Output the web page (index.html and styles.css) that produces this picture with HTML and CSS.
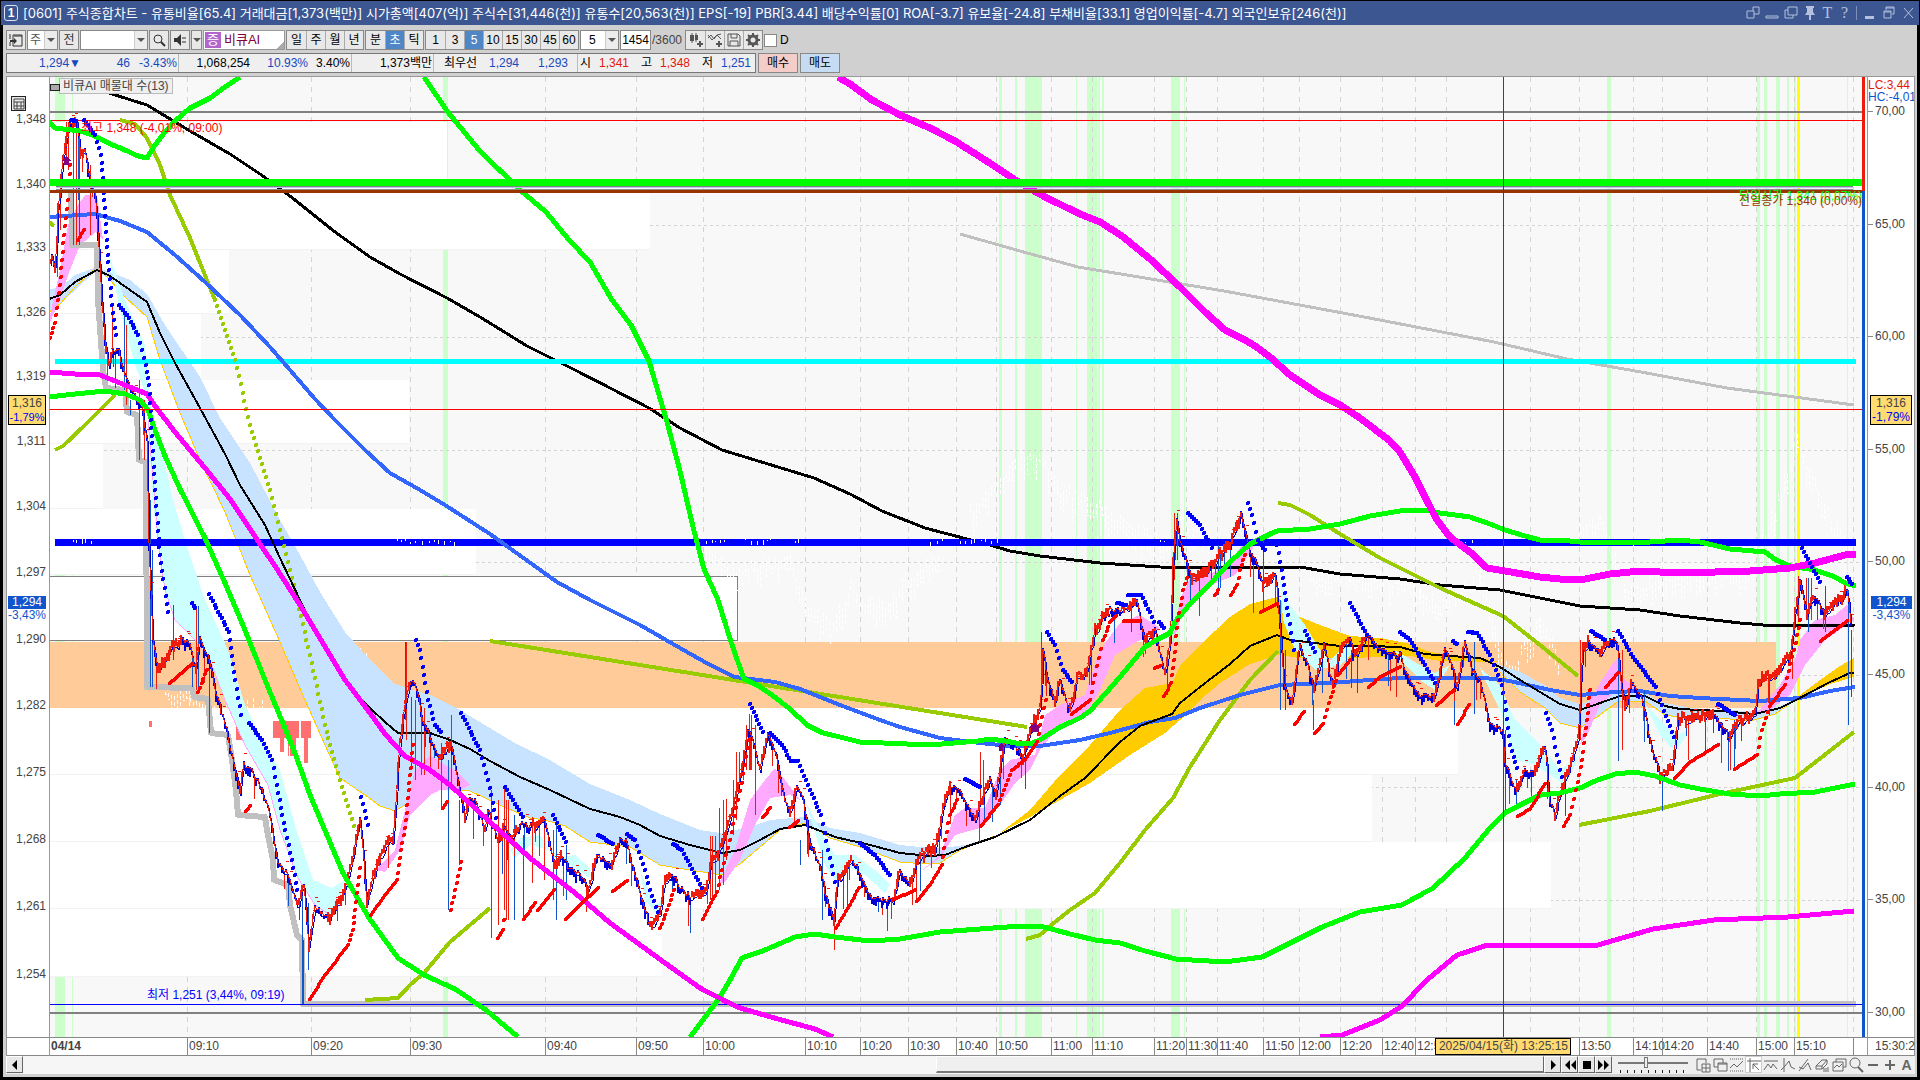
FILE: index.html
```html
<!DOCTYPE html>
<html lang="ko">
<head>
<meta charset="utf-8">
<title>[0601] 주식종합차트</title>
<link rel="stylesheet" href="styles.css">
</head>
<body>
<div class="window">
  <header class="titlebar">
    <span class="badge">1</span>
    <h1 class="title">[0601] 주식종합차트 - 유통비율[65.4] 거래대금[1,373(백만)] 시가총액[407(억)] 주식수[31,446(천)] 유통수[20,563(천)] EPS[-19] PBR[3.44] 배당수익률[0] ROA[-3.7] 유보율[-24.8] 부채비율[33.1] 영업이익률[-4.7] 외국인보유[246(천)]</h1>
    <div class="winbtns">
      <button aria-label="분리"><svg viewBox="0 0 16 16"><path d="M2 6h7v7H2zM8 2h6v7h-5M8 2v4"/></svg></button>
      <button aria-label="숨김"><svg viewBox="0 0 16 16"><path d="M2 11h12v2H2z"/></svg></button>
      <button aria-label="복사"><svg viewBox="0 0 16 16"><path d="M5 2h9v8H5zM5 5H2v8h8v-3"/></svg></button>
      <button aria-label="고정"><svg viewBox="0 0 16 16"><path class="solid" d="M4 1h8v2h-1v4l2 3H9v5H7v-5H3l2-3V3H4z"/></svg></button>
      <button class="glyph">T</button>
      <button class="glyph">?</button>
      <span class="sep"></span>
      <button aria-label="최소화"><svg viewBox="0 0 16 16"><path class="solid" d="M3 11h9v3H3z"/></svg></button>
      <button aria-label="이전 크기"><svg viewBox="0 0 16 16"><path d="M5 5V2h8v7h-2M5 3h8M3 6h7v7H3zM3 7h7"/></svg></button>
      <button aria-label="닫기"><svg viewBox="0 0 16 16"><path d="M4 3l9 10M13 3L4 13"/></svg></button>
    </div>
  </header>

  <div class="panel">
    <div class="tools">
      <button class="btn" aria-label="메뉴"><svg viewBox="0 0 16 16"><path d="M5 3h9v11H5zM6 4h8M2 2v5M2 10v4"/><path class="solid" d="M2 8h4V6l3 3-3 3v-2H2z"/></svg></button>
      <div class="combo w-31"><select aria-label="구분"><option>주</option></select><i></i></div>
      <button class="btn">전</button>
      <div class="combo w-68"><input aria-label="종목코드" value=""><i></i></div>
      <button class="btn" aria-label="찾기"><svg viewBox="0 0 16 16"><circle cx="7" cy="7" r="4"/><path d="M10 10l4 4" stroke-width="2"/></svg></button>
      <button class="btn" aria-label="소리"><svg viewBox="0 0 16 16"><path class="solid" d="M2 6h3l4-4v12l-4-4H2z"/><path d="M11 5v2M11 9v2M13 5v2M13 9v2"/></svg></button>
      <button class="btn drop" aria-label="소리 설정"><i></i></button>
      <div class="stock"><b>증</b><span>비큐AI</span></div>
      <div class="group"><button>일</button><button>주</button><button>월</button><button>년</button></div>
      <div class="group"><button>분</button><button class="on">초</button><button>틱</button></div>
      <div class="group"><button>1</button><button>3</button><button class="on">5</button><button>10</button><button>15</button><button>30</button><button>45</button><button>60</button></div>
      <div class="combo w-39"><select aria-label="주기"><option>5</option></select><i></i></div>
      <input class="count" aria-label="봉 개수" value="1454">
      <span class="total">/3600</span>
      <div class="group">
        <button aria-label="차트 추가"><svg viewBox="0 0 16 16"><path class="solid" d="M2 3h4v6H2zM7 3h3v5H7zM11 9h2v2h2v2h-2v2h-2v-2H9v-2h2z"/><path d="M4 1v10M8 1v9"/></svg></button>
        <button aria-label="지표 추가"><svg viewBox="0 0 16 16"><path d="M1 6l3-3 3 4 3-4 4 4M1 3l4 5 5-5 4-1"/><path class="solid" d="M11 9h2v2h2v2h-2v2h-2v-2H9v-2h2z"/></svg></button>
        <button aria-label="저장"><svg viewBox="0 0 16 16"><path d="M2 2h10l2 2v10H2zM5 2v4h6V2M4 14V9h8v5"/></svg></button>
        <button aria-label="설정"><svg viewBox="0 0 16 16"><circle cx="8" cy="8" r="4" stroke-width="3"/><path stroke-width="2" d="M8 1v3M8 12v3M1 8h3M12 8h3M3 3l2 2M11 11l2 2M13 3l-2 2M5 11l-2 2"/></svg></button>
      </div>
      <label class="check"><input type="checkbox">D</label>
    </div>

    <div class="quote">
      <div class="quotebox">
        <span class="c74 down">1,294▼</span><span class="c49 down">46</span><span class="c47 down">-3.43%</span><span class="vr"></span>
        <span class="c70">1,068,254</span><span class="c58 down">10.93%</span><span class="c42">3.40%</span><span class="vr"></span>
        <span class="c79">1,373백만</span><span class="vr"></span>
        <span class="c42">최우선</span><span class="c42 down">1,294</span><span class="c49 down">1,293</span><span class="gap"></span><span class="vr"></span>
        <span class="c12">시</span><span class="c38 up">1,341</span><span class="c24">고</span><span class="c38 up">1,348</span><span class="c24">저</span><span class="c38 down">1,251</span>
      </div>
      <button class="trade buy">매수</button>
      <button class="trade sell">매도</button>
    </div>

    <main class="chart">
      <div class="axis left" id="leftAxis">
        <button class="gridbtn" aria-label="표"><svg viewBox="0 0 16 16"><path d="M3 3h10v10H3zM3 6h10M3 10h10M6 6v7M10 6v7"/></svg></button>
        <div class="cursor">1,316<br><em>-1,79%</em></div>
        <div class="last"><b>1,294</b><span>-3,43%</span></div>
      </div>
      <div class="plot">
        <svg id="plot" viewBox="50 77 1817 960" preserveAspectRatio="none" role="img" aria-label="비큐AI 5초 차트"></svg>
        <span class="legend">비큐AI 매물대 수(13)</span>
        <span class="note high">최고 1,348 (-4,01%, 09:00)</span>
        <span class="note low">최저 1,251 (3,44%, 09:19)</span>
        <span class="note open">당일시가 1,341 (0,07%)</span>
        <span class="note prev">전일종가 1,340 (0,00%)</span>
      </div>
      <div class="axis right" id="rightAxis">
        <div class="lc">LC:3,44</div><div class="hc">HC:-4,01</div>
        <div class="cursor">1,316<br><em>-1,79%</em></div>
        <div class="last"><b>1,294</b><span>-3,43%</span></div>
      </div>
      <div class="corner"></div>
      <div class="times" id="times"><span class="stamp">2025/04/15(화) 13:25:15</span></div>
      <div class="endtime">15:30:2</div>
    </main>

    <footer class="scroll">
      <button class="btn arrow" aria-label="왼쪽"><svg viewBox="0 0 16 16"><path class="solid" d="M10 3v10L5 8z"/></svg></button>
      <div class="track"><div class="thumb"></div></div>
      <div class="play">
        <button class="btn" aria-label="재생"><svg viewBox="0 0 16 16"><path class="solid" d="M6 3v10l5-5z"/></svg></button>
        <button class="btn" aria-label="뒤로"><svg viewBox="0 0 16 16"><path class="solid" d="M8 3v10L3 8zM14 3v10L9 8z"/></svg></button>
        <button class="btn" aria-label="정지"><svg viewBox="0 0 16 16"><path class="solid" d="M4 4h8v8H4z"/></svg></button>
        <button class="btn" aria-label="앞으로"><svg viewBox="0 0 16 16"><path class="solid" d="M2 3v10l5-5zM8 3v10l5-5z"/></svg></button>
      </div>
      <div class="slider"><input type="range" min="0" max="10" value="4" aria-label="속도"></div>
      <div class="icons">
        <button aria-label="창 추가"><svg viewBox="0 0 16 16"><path d="M6 13H2V2h9v4M7 7h8v8H7zM11 7v8M7 11h8"/></svg></button>
        <button aria-label="창 겹침"><svg viewBox="0 0 16 16"><path d="M6 10H2V2h9v4M6 6h9v8H6zM6 7h9"/></svg></button>
        <button aria-label="추세"><svg viewBox="0 0 16 16"><path stroke-dasharray="1 1" d="M1 2h14M1 14h14"/><path d="M1 11l4-4 3 3 6-6"/></svg></button>
        <button class="on" aria-label="십자선"><svg viewBox="0 0 16 16"><path d="M1 4h14M4 1v14M7 7l6 6M7 7v5M7 7h5"/></svg></button>
        <button aria-label="수평선"><svg viewBox="0 0 16 16"><path d="M1 4h14M1 13l4-6 3 4 2-4 4 5"/></svg></button>
        <button aria-label="수직선"><svg viewBox="0 0 16 16"><path d="M4 1v14M1 13l4-4 4-5 2 6 4 2"/></svg></button>
        <button aria-label="추세선"><svg viewBox="0 0 16 16"><path d="M2 14L11 2M2 10l4 2 5-6 3 7"/></svg></button>
        <button aria-label="지우기"><svg viewBox="0 0 16 16"><path d="M2 9l6-6h5l-5 6zM2 9v3h6l5-5V3M8 9v3M10 11v4M12 11v4M14 10v5"/></svg></button>
        <button aria-label="차트 복사"><svg viewBox="0 0 16 16"><path d="M5 5V2h10v8h-3M2 5h10v9H2zM3 11l3-3 2 2 3-3"/></svg></button>
        <button aria-label="돋보기"><svg viewBox="0 0 16 16"><circle cx="7" cy="6" r="5"/><path stroke-width="2" d="M10 10l5 5"/></svg></button>
        <button aria-label="축소"><svg viewBox="0 0 16 16"><path stroke-width="2" d="M3 8h10"/></svg></button>
        <button aria-label="확대"><svg viewBox="0 0 16 16"><path stroke-width="2" d="M3 8h10M8 3v10"/></svg></button>
        <button class="glyph">A</button>
      </div>
    </footer>
  </div>
</div>
<script src="chart.js"></script>
</body>
</html>
```
FILE: styles.css
```css
* { box-sizing: border-box; }
body {
  margin: 0;
  background: #000;
  font: 12px/14px "Liberation Sans", "Noto Sans CJK KR", sans-serif;
  color: #000;
}
button, input, select { font: inherit; color: inherit; margin: 0; padding: 0; border: 0; border-radius: 0; background: none; appearance: none; }
svg { display: block; }
button svg { width: 16px; height: 16px; fill: none; stroke: currentColor; stroke-width: 1; flex: none; }
svg .solid { fill: currentColor; stroke: none; }

.window { display: flex; flex-direction: column; min-height: 100vh; padding: 1px 1px 3px; }

/* title bar */
.titlebar { display: flex; align-items: center; height: 24px; padding: 0 2px 0 3px; background: #3b5691; color: #fff; }
.badge { width: 14px; height: 16px; margin-right: 5px; border: 1px solid #dbe3f5; border-radius: 3px; text-align: center; font-weight: bold; line-height: 14px; }
.title { margin: 0; font-family: Inter, "Noto Sans CJK KR", sans-serif; font-size: 13px; line-height: 20px; font-weight: normal; white-space: nowrap; flex: 1; min-width: 0; }
.winbtns { display: flex; align-items: center; color: #b4c0dc; }
.winbtns button { width: 19px; display: flex; justify-content: center; }
.winbtns .glyph { width: 17px; font: 16px/16px "Liberation Serif", serif; }
.winbtns .sep { width: 1px; height: 14px; margin: 0 3px; background: #7d8fb8; }

.panel { display: flex; flex-direction: column; flex: 1; margin: 0 2px; padding: 5px 2px 3px 3px; background: #d0d0d0; }

/* tool row */
.tools { display: flex; height: 20px; gap: 1px; }
.btn { display: flex; align-items: center; justify-content: center; width: 20px; height: 20px; border: 1px solid #888; background: #e8e8e8; color: #555; overflow: hidden; }
.tools .btn { color: #333; }
.btn.drop { width: 11px; }
.combo { display: flex; height: 20px; border: 1px solid #888; background: #fff; }
.combo select, .combo input { flex: 1; min-width: 0; padding: 0 4px; }
.w-31 { width: 31px; color: #555; }
.combo.w-31 select { padding: 0 0 0 2px; }
.w-39 { width: 39px; }
.w-39 select { padding: 0 8px; }
.w-68 { width: 68px; }
i { display: flex; align-items: center; justify-content: center; width: 13px; background: #ececec; border-left: 1px solid #ccc; }
i::after { content: ""; border: 4px solid transparent; border-top-color: #555; border-bottom: 0; }
.drop i { border: 0; width: 9px; }
.stock { display: flex; align-items: center; width: 82px; height: 20px; padding: 1px; border: 1px solid #999; background: linear-gradient(135deg, #fff 92%, #aaa 92%); color: #800040; font-size: 13px; }
.stock b { width: 16px; height: 16px; margin-right: 3px; background: #b266cc; color: #fff; font-weight: normal; text-align: center; line-height: 16px; }
.group { display: flex; border: 1px solid #888; background: #e8e8e8; }
.group button { display: flex; align-items: center; justify-content: center; width: 19px; border-left: 1px solid #aaa; }
.group button:first-child { border-left: 0; }
.group .on { background: #4f86c6; color: #fff; }
.group svg { color: #555; }
.count { width: 31px; border: 1px solid #888; background: #fff; text-align: center; }
.total { width: 32px; line-height: 20px; color: #444; }
.check { display: flex; align-items: center; gap: 3px; }
.check input { width: 13px; height: 13px; border: 1px solid #888; background: #fff; }

/* quote row */
.quote { display: flex; gap: 2px; height: 20px; margin: 3px 0; }
.quotebox { display: flex; align-items: center; width: 750px; border: 1px solid #777; background: #efefef; text-align: right; }
.quotebox .vr { width: 1px; height: 18px; margin: 0 1px; background: #bbb; }
.quotebox .gap { width: 8px; }
.c12 { width: 12px; } .c24 { width: 23px; } .c38 { width: 38px; } .c42 { width: 42px; }
.c47 { width: 47px; } .c49 { width: 49px; } .c58 { width: 58px; } .c70 { width: 70px; }
.c74 { width: 74px; } .c79 { width: 79px; }
.down { color: #1748c0; }
.up { color: #e21a0a; }
.trade { width: 40px; border: 1px solid #888; }
.buy { background: #f4cdc8; }
.sell { background: #c5dcf3; }

/* chart */
.chart { flex: 1; display: grid; grid-template-columns: 42px minmax(0, 1fr) 47px; grid-template-rows: minmax(400px, 1fr) 19px; border: 1px solid #999; border-bottom: 0; background: #fff; color: #444; }
.plot { position: relative; border-left: 1px solid #999; min-height: 0; }
.plot svg { position: absolute; inset: 0; width: 100%; height: 100%; background: #f8f8f8; }
.legend { position: absolute; left: 9px; top: 1px; padding: 0 3px; border: 1px solid #bbb; background: #efefef; }
.legend::before { content: ""; position: absolute; left: -10px; top: 5px; width: 8px; height: 5px; border: 1px solid #222; background: #aaa; }
.note { position: absolute; white-space: nowrap; }
.high { left: 31px; top: 4.6%; color: #f00; }
.low { left: 97px; top: 94.9%; color: #00f; }
.open { right: 5px; top: 11.7%; color: #0f0; }
.prev { right: 5px; top: 12.2%; color: #930; }
.axis { position: relative; overflow: hidden; }
.axis .tick { position: absolute; margin-top: -8px; }
.left .tick { right: 3px; }
.right { border-left: 1px solid #999; }
.right .tick { left: 0; padding-left: 7px; }
.right .tick::before { content: ""; position: absolute; left: 0; top: 7px; width: 5px; height: 1px; background: #888; }
.gridbtn { position: absolute; left: 4px; top: 19px; width: 15px; height: 15px; border: 1px solid #222; background: #e8e8e8; display: flex; align-items: center; justify-content: center; }
.cursor { position: absolute; top: 33.1%; left: 1px; width: 38px; height: 30px; border: 1px solid #000; background: #ffdb70; text-align: center; white-space: nowrap; }
.right .cursor { left: 2px; width: 42px; }
.cursor em { font-style: normal; color: #00f; }
.left em { font-size: 11px; }
.last { position: absolute; top: 54.1%; left: 1px; width: 38px; text-align: center; color: #1155cc; }
.last b { display: block; height: 13px; line-height: 13px; background: #1155cc; color: #fff; font-weight: normal; }
.last span { display: block; line-height: 13px; }
.right .last { left: 3px; width: 41px; }
.lc, .hc { white-space: nowrap; color: #e21a0a; line-height: 12px; }
.lc { padding-top: 2px; }
.hc { color: #1155cc; }
.times, .corner, .endtime { border-top: 1px solid #888; border-bottom: 1px solid #888; }
.times { position: relative; border-left: 1px solid #999; overflow: hidden; }
.times .t { position: absolute; top: 0; height: 18px; padding-left: 1px; border-left: 1px solid #888; line-height: 17px; white-space: nowrap; }
.times .first { font-weight: bold; border-left: 0; }
.stamp { position: absolute; z-index: 1; left: 76.25%; top: 0; width: 136px; height: 17px; border: 1px solid #000; background: #ffdb70; text-align: center; line-height: 15px; white-space: nowrap; overflow: hidden; }
.endtime { padding-left: 7px; border-left: 1px solid #999; line-height: 17px; white-space: nowrap; }

/* scroll row */
.scroll { display: flex; height: 18px; background: #efefef; }
.scroll .btn { width: 17px; height: 17px; color: #000; border-color: #fff #666 #666 #fff; }
.track { flex: 1; background: #f6f6f6; }
.thumb { width: 40%; margin-left: auto; height: 17px; border: 1px solid #fff; border-right-color: #666; border-bottom: 2px solid #777; background: #efefef; }
.play { display: flex; }
.slider { width: 82px; padding: 0 6px; background: repeating-linear-gradient(90deg, #222 0 1px, transparent 1px 7px) 8px 14px / 68px 3px no-repeat; }
.slider input { display: block; width: 70px; height: 13px; background: linear-gradient(#777, #777) 0 6px / 100% 2px no-repeat; }
.slider input::-webkit-slider-thumb { appearance: none; width: 4px; height: 11px; border: 1px solid #777; background: #eee; }
.icons { display: flex; width: 221px; color: #666; }
.icons button { display: flex; align-items: center; justify-content: center; width: 17px; height: 17px; }
.icons .on { background: #fff; border: 1px solid #ccc; }
.icons .glyph { font-weight: bold; font-size: 14px; }
```
FILE: chart.js
```js
const NS = 'http://www.w3.org/2000/svg';
const svg = document.getElementById('plot');
function el(name, attrs) {
  const n = document.createElementNS(NS, name);
  for (const k in attrs) n.setAttribute(k, attrs[k]);
  svg.appendChild(n);
  return n;
}
const rect = (x, y, x2, y2, fill) => el('rect', { x, y, width: x2 - x, height: y2 - y, fill, 'shape-rendering': 'crispEdges' });
const line = (pts, stroke, w, extra) => el('polyline', Object.assign({ points: pts, fill: 'none', stroke, 'stroke-width': w, 'stroke-linejoin': 'round', 'shape-rendering': 'crispEdges' }, extra));
const area = (pts, fill) => el('polygon', { points: pts, fill, 'shape-rendering': 'crispEdges' });
const parse = s => s.trim().split(/\s+/).map(p => p.split(',').map(Number));
let seed = 7;
const rnd = () => (seed = (seed * 16807) % 2147483647) / 2147483647;

// session highlights
[[55,65],[72,73],[443,448],[999,1002],[1015,1017],[1025,1042],[1076,1077],[1087,1097],[1098,1100],[1102,1104],[1171,1180],[1184,1185],[1607,1611],[1757,1760],[1764,1767],[1776,1780],[1787,1789],[1794,1796],[1847,1848]]
  .forEach(([a, b]) => rect(a, 77, b, 1037, '#ccffcc'));

// time and percent grid
const times = [[50,'04/14'],[187,'09:10'],[311,'09:20'],[410,'09:30'],[545,'09:40'],[636,'09:50'],[703,'10:00'],[805,'10:10'],[860,'10:20'],[908,'10:30'],[956,'10:40'],[996,'10:50'],[1051,'11:00'],[1092,'11:10'],[1154,'11:20'],[1186,'11:30'],[1217,'11:40'],[1263,'11:50'],[1299,'12:00'],[1340,'12:20'],[1382,'12:40'],[1415,'12:5'],[1446,''],[1530,''],[1579,'13:50'],[1633,'14:10'],[1662,'14:20'],[1707,'14:40'],[1756,'15:00'],[1794,'15:10'],[1853,'']];
times.slice(1).forEach(([x]) => line(`${x},77 ${x},1037`, '#d4d4d4', 1, { 'stroke-dasharray': '5 5' }));
[225,337,450,562,675,787,900].forEach(y => line(`50,${y} 1862,${y}`, '#d4d4d4', 1, { 'stroke-dasharray': '3 3' }));

// volume profile
[[122,187,447],[187,250,650],[250,314,229],[314,380,201],[380,444,409],[444,509,103],[509,575,476],[708,775,1458],[775,842,1372],[842,909,1551],[909,977,662]]
  .forEach(([a, b, x]) => { rect(50, a, x, b, '#fff'); rect(50, b - 1, x, b, '#f3f3f3'); });
el('rect', { x: 49, y: 576, width: 688, height: 64, fill: '#fff', stroke: '#808080', 'shape-rendering': 'crispEdges' });
rect(50, 642, 1776, 708, '#ffcc99');
rect(1797, 77, 1800, 1037, '#ffff00');
[[149,721,152,727],[236,721,242,740],[273,721,299,738],[301,721,311,738],[280,738,284,752],[290,738,296,756],[304,738,308,763],[288,738,289,756]].forEach(r => rect(...r, '#ff7070'));

// earlier session trace
function trace(s) {
  const p = parse(s); let d = '';
  for (let i = 1; i < p.length; i++) for (let x = p[i-1][0]; x < p[i][0]; x += 3) {
    const y = p[i-1][1] + (p[i][1] - p[i-1][1]) * (x - p[i-1][0]) / (p[i][0] - p[i-1][0]);
    d += `M${Math.round(x)} ${Math.round(y + rnd() * 14)}v${Math.round(6 + rnd() * 18)}h2`;
  }
  el('path', { d, fill: 'none', stroke: '#fff', 'stroke-dasharray': '4 2', 'shape-rendering': 'crispEdges' });
}
trace('700,530 730,560 790,550 805,590 830,620 850,580 870,595 890,600 905,570 940,545');
trace('970,500 1030,440 1060,480 1160,530 1210,520');
trace('1310,570 1350,560 1420,580 1440,600 1480,560 1503,650 1515,655 1540,610 1560,650');
trace('1580,520 1600,510 1625,580 1660,570 1700,565 1750,560 1775,500 1797,430 1825,500 1850,540');
trace('165,680 190,690 220,700 250,700 265,690'); trace('320,710 345,680 360,645 375,660');

// moving-average clouds
const sky = '#c8e3ff', gold = '#ffcc00';
area('49,289 60,288 75,275 97,267 130,280 147,294 165,325 200,377 220,418 250,463 280,520 300,555 320,592 345,632 370,660 395,684 430,695 460,710 480,722 515,743 550,760 590,784 630,800 660,814 700,830 720,833 750,827 770,820 805,817 830,828 860,833 900,845 930,848 950,847 965,845 995,836 960,850 940,863 925,864 900,862 860,847 830,838 805,823 780,830 760,847 740,864 722,875 690,870 660,865 630,847 590,842 565,826 545,820 530,818 500,805 470,791 440,788 420,796 395,811 380,806 365,795 340,778 325,745 305,700 280,642 250,575 225,512 200,460 180,413 160,360 147,317 125,297 110,280 97,270 60,304 49,312', sky);
line('49,312 60,304 75,287 97,267 110,280 125,297 147,317 160,360 180,413 200,460 225,512 250,575 280,642 305,700 325,745 340,778 365,795 380,806 395,811 420,796 440,788 470,791 500,805 530,818 545,820 565,826 590,842 630,847 660,865 690,870 722,875 740,864 760,847 780,830 805,823 830,838 860,847 900,862 925,864 940,863 960,850 995,836', gold, 1);
area('1000,833 1030,810 1060,775 1090,745 1120,710 1145,688 1172,683 1180,666 1200,645 1230,617 1250,604 1277,597 1295,615 1320,625 1350,636 1380,638 1410,644 1430,652 1450,655 1480,658 1500,662 1440,661 1410,656 1350,658 1300,658 1278,655 1250,664 1220,683 1200,700 1180,720 1165,733 1130,755 1090,783 1060,800 1030,817', gold);
area('1495,663 1520,672 1545,685 1560,698 1580,704 1600,698 1617,688 1640,690 1660,702 1690,708 1720,710 1755,711 1780,706 1800,697 1775,714 1750,721 1720,718 1690,719 1665,715 1645,701 1617,702 1600,715 1580,728 1560,723 1545,708 1520,692 1500,672', sky);
line('1500,672 1520,692 1545,708 1560,723 1580,728 1600,715 1617,702 1645,701 1665,715 1690,719 1720,718 1750,721 1775,714 1800,697', gold, 1);
area('1800,695 1820,680 1840,666 1854,658 1854,677 1830,684 1800,698', gold);

// short-term ribbons
['108,252 125,300 145,345 150,400 173,500 185,540 205,600 228,650 245,705 262,740 280,770 295,825 313,880 332,888 345,880 340,905 330,915 315,905 298,878 280,830 268,785 245,745 225,700 210,660 195,640 175,620 165,590 158,540 152,500 148,400 135,365 120,310','510,850 520,838 540,835 555,858 575,855 590,868 590,878 570,865 550,850 530,845 515,858','640,870 655,905 665,898 657,915 645,900','805,800 820,830 835,855 855,855 875,870 890,885 885,893 865,875 850,868 835,880 825,865','1280,580 1290,605 1305,625 1320,650 1330,660 1345,645 1360,645 1340,665 1315,670 1295,650 1283,620','1395,650 1420,665 1435,673 1450,665 1435,690 1420,680 1400,660','1480,668 1500,685 1515,720 1540,745 1560,770 1580,755 1565,785 1550,775 1535,765 1515,760 1500,710 1485,680','1645,705 1660,720 1675,735 1690,730 1675,752 1660,735'].forEach(p => area(p, '#ccffff'));
['49,320 60,270 68,225 78,205 85,195 97,195 103,240 96,232 80,245 70,270 60,300 50,322','375,870 395,850 405,810 415,770 430,755 445,765 455,770 470,785 460,790 440,790 430,795 410,815 400,850 385,872','718,885 735,850 750,800 765,780 775,768 785,780 800,800 790,795 770,798 755,825 740,860 725,882','920,872 940,855 955,815 965,808 985,808 1000,770 1010,760 1035,755 1045,715 1060,705 1085,695 1100,650 1120,623 1140,615 1160,628 1140,640 1115,655 1100,690 1085,715 1060,725 1040,750 1030,770 1015,783 1000,805 980,828 955,835 940,858','1171,650 1180,600 1190,578 1215,572 1235,555 1247,538 1255,545 1235,575 1200,590 1180,620','1580,745 1590,700 1605,675 1617,658 1625,680 1640,690 1617,690 1600,705 1587,735','1758,712 1780,685 1795,660 1800,640 1815,620 1835,615 1847,605 1854,620 1847,625 1825,640 1805,665 1790,695 1770,710'].forEach(p => area(p, '#ffaaff'));
line('148,420 158,540 165,590 175,620 195,640 210,660 225,700 245,745 268,785 280,830 298,878 315,905 330,915', '#ffaaff', 1);

// levels
line('71,190 72,245 97,245 98,300 103,370 106,388 125,390 127,412 137,415 139,460 146,462 147,687 192,688 194,697 208,699 211,733 228,735 232,760 236,790 238,815 265,817 267,830 273,860 274,880 288,885 290,905 297,935 302,940 303,1004 1856,1004', '#c0c0c0', 6);
rect(50, 111, 1862, 113, '#808080');
rect(50, 1012, 1862, 1014, '#808080');
rect(50, 120, 1862, 121, '#ff0000');
rect(50, 1004, 1862, 1005, '#0000ff');

// long moving averages
const olive = '#99cc00', lime = '#00ff00', pink = '#ff00ff';
line('960,234 1020,251 1078,267 1224,291 1359,316 1494,342 1567,359 1641,372 1727,388 1854,405', '#c0c0c0', 3);
line('90,85 112,94 147,105 190,131 230,154 260,174 290,196 335,232 370,257 400,274 447,298 480,317 527,346 575,370 649,408 680,428 722,450 814,478 850,494 882,511 925,528 967,539 990,545 1010,551 1040,556 1100,563 1160,567 1200,568 1300,567 1340,574 1400,579 1440,585 1500,590 1540,598 1580,606 1640,610 1680,616 1740,623 1775,626 1855,625', '#000', 3);
line('55,361 1856,361', '#00ffff', 5);
line('55,542 1856,542', '#0000ff', 7);
let chips = '';
[[73,95],[397,455],[706,725],[745,775],[795,802],[930,945],[960,1000],[1160,1168],[1460,1475],[1618,1634]].forEach(([a, b]) => {
  for (let x = a; x < b; x += 3 + Math.round(rnd() * 4)) chips += `M${x} ${539 + Math.round(rnd() * 3)}v${1 + Math.round(rnd() * 4)}`;
});
el('path', { d: chips, stroke: '#fff', 'stroke-width': 1, 'shape-rendering': 'crispEdges' });
['49,222 54,226','120,120 135,124 147,138 160,165 170,195 190,238 215,300','55,450 63,446 85,425 115,395','365,1000 398,998 410,985 425,972 450,942 490,908','490,641 1027,727','1026,939 1040,935 1050,926 1070,910 1095,893 1120,863 1145,830 1173,798 1190,767 1220,720 1250,680 1278,651','1278,503 1290,505 1310,515 1340,534 1380,558 1440,588 1503,616 1540,645 1578,676','1579,825 1650,811 1720,794 1795,778 1854,732'].forEach(p => line(p, olive, 4));
dots('215,300 235,360 250,425 270,490 290,570 310,655 325,725 330,745 340,780 354,826', olive, 1);
line('49,217 95,214 120,221 147,232 175,255 205,282 240,315 270,347 290,370 315,399 335,420 365,450 390,473 420,490 445,505 490,534 557,582 590,600 640,625 680,648 710,665 735,677 775,682 800,689 840,705 880,720 900,727 940,738 980,743 1010,746 1040,746 1080,740 1110,733 1150,722 1175,718 1200,708 1240,695 1280,685 1330,683 1370,680 1400,678 1485,678 1510,681 1550,690 1580,695 1615,692 1640,691 1670,696 1700,698 1760,701 1800,698 1830,691 1855,687', '#3366ff', 4);
line('49,299 60,295 75,282 97,270 110,276 130,290 147,302 160,333 175,363 200,408 225,454 240,485 265,525 280,558 300,600 320,640 340,670 355,693 370,708 385,722 398,733 430,733 450,740 470,749 490,761 520,777 550,790 590,809 620,817 640,825 660,836 690,845 722,853 740,850 760,840 780,829 805,825 823,832 835,837 870,845 900,853 930,856 945,855 965,847 995,837 1030,820 1060,796 1085,778 1120,742 1140,726 1172,714 1180,703 1200,687 1230,664 1250,646 1277,635 1290,640 1315,643 1340,646 1370,646 1400,647 1425,654 1450,656 1480,658 1500,667 1520,680 1540,692 1560,704 1580,710 1600,703 1620,696 1645,696 1665,706 1680,709 1720,711 1755,714 1780,708 1796,700 1830,682 1850,673 1854,673', '#000', 2);

// price bars
const price = parse('50,265 52,255 55,270 58,210 63,160 66,140 70,122 73,125 77,122 80,155 85,150 90,175 95,195 98,230 100,260 102,300 105,340 109,365 113,350 119,352 125,375 135,395 143,410 147,440 149,540 153,640 158,667 165,660 172,648 183,640 190,645 196,670 200,640 210,660 216,695 225,722 230,745 236,770 240,790 244,765 250,765 262,790 270,815 278,865 288,873 297,905 304,885 309,945 315,905 328,920 343,895 350,870 356,840 360,815 367,900 375,870 384,850 393,838 400,740 405,705 411,680 417,690 423,720 430,735 440,760 445,750 452,745 460,790 465,815 470,795 475,800 485,830 488,808 498,842 505,825 512,840 520,825 533,825 545,822 555,865 563,855 570,870 580,872 588,890 597,855 605,862 612,865 620,840 626,840 635,875 645,910 650,925 660,915 665,880 672,873 682,890 692,897 705,890 712,860 720,850 730,820 740,780 748,730 752,735 760,770 768,735 776,755 785,800 790,810 797,785 803,800 810,840 820,865 827,900 834,920 838,880 845,870 853,860 862,880 872,898 893,900 900,870 910,885 920,855 935,850 945,800 952,785 960,792 970,810 975,818 990,780 996,795 1005,740 1015,745 1023,758 1030,730 1040,710 1043,650 1048,680 1055,700 1060,680 1070,710 1077,680 1087,675 1095,630 1100,622 1110,608 1122,612 1137,600 1145,640 1155,630 1165,675 1170,640 1173,560 1177,520 1180,540 1185,555 1192,578 1205,572 1215,562 1222,552 1230,545 1241,515 1250,550 1255,560 1263,585 1275,572 1280,620 1284,685 1292,702 1300,645 1308,665 1314,690 1324,645 1333,685 1342,645 1350,640 1355,655 1368,635 1380,650 1400,655 1410,680 1420,695 1434,697 1445,650 1452,665 1457,690 1465,640 1472,670 1480,680 1490,725 1503,730 1505,765 1517,790 1525,770 1535,772 1545,745 1550,800 1555,815 1560,795 1567,775 1578,740 1583,650 1590,640 1600,655 1610,640 1617,641 1622,690 1625,705 1633,680 1643,700 1650,740 1660,775 1672,770 1678,720 1690,718 1715,715 1725,730 1730,738 1735,725 1745,720 1755,713 1758,685 1762,678 1775,677 1783,662 1790,655 1797,600 1800,580 1807,615 1815,595 1825,615 1833,605 1840,600 1847,590 1851,620 1853,640');
let red = '', navy = '', wr = '', wb = '', path = [], path2 = [];
for (let i = 1; i < price.length; i++) {
  const [x0, y0] = price[i-1], [x1, y1] = price[i];
  const n = Math.max(1, Math.round((x1 - x0) / 2));
  for (let k = 0; k < n; k++) {
    const x = Math.round(x0 + (x1 - x0) * k / n), y = Math.round(y0 + (y1 - y0) * k / n + (rnd() - .5) * 6);
    path.push(`${x},${y}`); path2.push(`${x + 1},${y + Math.round(rnd() * 4)}`);
    const r = rnd(), len = Math.round(4 + rnd() * 8);
    if (y1 < y0) red += `M${x} ${y - 5}v${len}`; else navy += `M${x} ${y - 1}v${len - 2}`;
    if (r < .07) wr += `M${x} ${y}v${Math.round(12 + rnd() * 28)}`;
    else if (r > .92) wb += `M${x} ${y}v${Math.round(12 + rnd() * 28)}`;
    else if (r > .75) wr += `M${x} ${y - 9}h3`;
  }
}
// long individual bars: x, top, bottom
[[66,122,160],[68,122,170],[73,122,245],[76,122,245],[90,165,235],[112,307,350],[126,325,405],[139,380,460],[144,400,460],[196,606,690],[406,642,740],[421,706,775],[415,700,780],[424,708,775],[441,743,808],[451,715,790],[491,790,938],[498,800,925],[506,800,920],[508,800,920],[504,788,910],[532,817,883],[544,817,880],[553,830,900],[710,836,900],[712,836,900],[715,836,895],[719,808,890],[723,800,885],[726,799,860],[733,780,835],[736,752,820],[739,752,780],[743,752,780],[746,725,770],[749,714,770],[751,715,770],[755,725,815],[980,752,800],[983,760,790],[1041,632,700],[1174,513,580],[1177,513,560],[1253,560,613],[1580,640,740],[1622,650,750],[1798,576,620],[1806,578,610],[1811,578,620]].forEach(([x,a,b]) => wr += `M${x} ${a}V${b}`);
[[78,122,200],[79,150,245],[124,315,390],[130,400,415],[150,500,687],[152,550,687],[173,605,660],[198,606,690],[209,667,733],[303,940,1004],[308,903,970],[302,885,1004],[405,642,720],[411,697,770],[448,760,910],[459,800,865],[514,815,920],[523,835,920],[556,820,920],[566,845,900],[800,840,865],[822,850,920],[1041,640,700],[1218,545,595],[1263,540,612],[1280,600,710],[1285,650,710],[1313,700,730],[1351,650,688],[1454,690,725],[1474,642,714],[1505,730,816],[1516,780,805],[1618,650,761],[1644,690,742],[1734,720,770],[1808,578,632],[1825,586,632],[1848,590,725],[1851,630,697]].forEach(([x,a,b]) => wb += `M${x} ${a}V${b}`);
const bars = (d, c, w) => el('path', { d, stroke: c, 'stroke-width': w, fill: 'none', 'shape-rendering': 'crispEdges' });
bars(wb, '#1155cc', 1); bars(wr, '#ee1c0c', 1);
bars(navy, '#0000dd', 2);
line(path2.join(' '), '#0000cc', 1);
bars(red, '#ee1c0c', 2);
line(path.join(' '), '#ee1c0c', 1);

// green and magenta channels
line('49,122 55,128 80,131 95,136 108,143 125,150 138,156 147,158 155,145 165,132 175,121 190,108 210,98 225,87 240,77', lime, 5);
line('424,77 447,111 465,133 480,151 520,190 546,212 569,240 590,262 612,300 631,325 649,361 667,422 680,471 693,527 704,569 718,600 731,642 744,679 757,685 772,695 790,709 807,725 823,733 840,737 860,742 930,745 978,741 990,739 1005,741 1016,743 1030,744 1040,740 1060,727 1080,718 1090,711 1105,694 1120,677 1130,665 1145,647 1160,638 1170,633 1175,622 1190,604 1210,584 1230,562 1250,544 1270,534 1277,531 1310,529 1340,524 1370,516 1400,511 1425,510 1440,513 1470,517 1490,524 1505,530 1525,536 1540,540 1560,540 1580,542 1650,542 1680,540 1700,542 1730,549 1765,552 1776,560 1790,566 1815,570 1835,577 1845,583 1856,586', lime, 5);
line('49,397 75,394 105,391 125,394 140,400 148,410 155,430 165,456 180,489 205,538 225,583 245,630 265,680 280,716 295,753 310,795 343,873 369,918 398,958 424,975 455,989 486,1010 518,1037', lime, 5);
line('690,1037 702,1021 718,1000 730,980 742,958 765,950 795,937 815,934 835,937 870,941 900,939 940,932 980,929 1020,926 1040,926 1070,934 1095,940 1120,943 1145,951 1176,959 1225,962 1262,957 1322,927 1360,912 1402,905 1433,888 1465,858 1490,828 1505,813 1520,805 1540,795 1560,793 1580,788 1595,781 1615,774 1635,772 1655,776 1680,785 1700,789 1730,794 1760,796 1780,794 1815,792 1835,788 1855,784', lime, 5);
line('838,77 850,84 872,100 900,115 930,128 955,141 985,160 1020,183 1045,197 1080,214 1100,222 1122,236 1150,259 1180,287 1205,312 1225,330 1245,340 1255,346 1270,357 1290,375 1320,395 1340,405 1360,418 1390,441 1400,452 1415,477 1425,497 1437,520 1450,537 1470,552 1487,568 1505,571 1540,577 1560,579 1585,579 1610,574 1640,571 1680,573 1750,571 1790,568 1815,563 1845,555 1856,554', pink, 7);
line('49,372 75,374 100,375 120,383 147,394 155,406 175,432 205,468 230,499 260,544 275,566 300,605 315,630 345,680 370,713 385,734 405,756 430,770 450,785 490,822 530,858 575,893 610,923 665,963 700,988 725,1001 740,1008 778,1019 815,1029 833,1037', pink, 5);
line('1320,1037 1342,1035 1380,1020 1402,1006 1427,980 1457,955 1488,945 1598,945 1653,929 1714,920 1788,917 1854,911', pink, 5);

// parabolic stops
function dots(s, c, step) {
  const p = parse(s); let d = '';
  for (let i = 1; i < p.length; i++) {
    const [x0, y0] = p[i-1], [x1, y1] = p[i], n = Math.max(1, Math.round((x1 - x0) / step / 2), Math.round(Math.abs(y1 - y0) / 8), Math.round((x1 - x0) / 2));
    for (let k = 0; k <= n; k++) d += `M${Math.round(x0 + (x1 - x0) * k / n)} ${Math.round(y0 + (y1 - y0) * k / n)}h0`;
  }
  el('path', { d, stroke: c, 'stroke-width': 4, 'stroke-linecap': 'round', fill: 'none', 'shape-rendering': 'crispEdges' });
}
['71,120 76,121','84,120 95,135 101,155 104,200 106,232 109,270 112,305 116,335','119,305 127,315 138,335 146,365 149,385 151,420 155,490 160,555 168,612','192,603 195,608','209,594 220,615 229,632 235,680 241,715','249,723 262,740 272,760 277,785 285,830 292,860 297,890','361,797 368,825','416,640 420,650 428,700 435,725 441,732','461,713 480,750 488,780 496,818','505,787 523,817','553,815 566,842','598,835 613,844','627,834 635,840 645,870 650,890 658,912','673,844 682,850 702,888','750,704 763,732','770,733 782,745 791,761 798,761 810,790 821,815 828,850 835,882','860,843 875,855 890,875','965,779 980,787','1047,632 1055,645 1063,670 1072,682','1117,603 1126,605','1128,595 1141,595 1150,612 1154,622','1159,622 1164,628','1188,513 1200,525 1212,548','1248,503 1252,515 1258,540 1265,550','1277,545 1282,570 1288,615 1294,650','1305,631 1315,652','1350,603 1367,635','1400,632 1410,640 1425,665 1435,683','1453,641 1457,644','1468,632 1477,633 1490,655 1502,685 1506,710 1510,745 1517,768','1546,713 1552,730 1557,755 1562,777','1591,631 1605,640','1618,631 1635,660 1656,687 1660,700 1674,737','1718,704 1735,715','1802,548 1820,582','1847,577 1852,584'].forEach(p => dots(p, '#0000ff', 1));
['50,338 55,323 60,285 64,235 68,200 70,165','78,240 84,230','170,683 192,664','198,692 207,670','246,811 250,806','310,999 325,975 348,945 353,930 355,910 358,885 360,868','371,915 385,895 397,880 401,850 406,820 410,775 413,745','443,808 447,802','451,910 455,890 461,862','498,938 503,930 504,920','524,919 535,903','538,910 554,890','566,919 580,905 598,888','613,891 627,881','660,928 667,910 674,890','703,919 711,903 717,892 722,870 730,840 738,800 745,765 749,740','763,817 770,808','790,827 798,821','836,928 848,908 859,888','893,900 915,890','917,901 930,885 942,865 945,840 950,815 957,800','981,826 998,805 1012,770 1025,760 1037,742 1040,725 1046,700','1072,714 1090,700 1095,675 1103,640 1110,622 1116,616','1124,621 1139,621','1155,668 1160,666','1164,696 1171,683 1174,660 1178,620 1183,590 1187,578','1215,595 1218,590','1231,595 1237,585 1240,570 1245,555','1261,612 1277,604','1295,724 1304,712','1315,733 1323,724 1329,703 1338,675 1350,660','1369,687 1380,677 1400,667','1437,705 1454,690','1458,724 1469,705','1518,816 1530,809 1545,784','1564,826 1570,815 1578,782 1582,760 1585,735 1590,690','1606,687 1618,673','1675,778 1690,762 1718,745','1735,769 1757,755 1762,730 1770,706 1785,685 1794,650 1800,620','1821,641 1847,621'].forEach(p => dots(p, '#ff0000', 1));
area('62,161 66,156 71,161 69,161 69,165 64,165 64,161', '#800080');
area('1028,728 1035,723 1041,728 1039,728 1039,732 1031,732 1031,728', '#800080');
area('997,747 1001,743 1005,747 1003,747 1003,751 999,751 999,747', '#800080');

// open, previous close, cursor and range bar
rect(50, 179, 1862, 186, lime);
rect(56, 186, 1853, 187, '#808080'); rect(56, 187, 1853, 188, '#b8c8f0'); rect(56, 189, 1853, 190, '#909090');
rect(50, 190, 1862, 193, '#993300');
rect(50, 409, 1862, 410, '#ff0000');
rect(1503, 77, 1504, 1037, '#e00000');
rect(1862, 77, 1865, 191, '#ee1c0c'); rect(1862, 191, 1865, 1037, '#1155cc');
rect(1865, 77, 1867, 1037, '#fff');

// axis labels
function label(parent, cls, text, prop, pct) {
  const s = document.createElement('span');
  s.className = cls; s.textContent = text; s.style[prop] = pct + '%';
  document.getElementById(parent).appendChild(s);
}
[[120,'1,348'],[185,'1,340'],[248,'1,333'],[313,'1,326'],[377,'1,319'],[442,'1,311'],[507,'1,304'],[573,'1,297'],[640,'1,290'],[706,'1,282'],[773,'1,275'],[840,'1,268'],[907,'1,261'],[975,'1,254']]
  .forEach(([y, t]) => label('leftAxis', 'tick', t, 'top', (y - 77) / 9.6));
[70,65,60,55,50,45,40,35,30].forEach((v, i) => label('rightAxis', 'tick', v + ',00', 'top', (112 + i * 112.6 - 77) / 9.6));
times.forEach(([x, t]) => { if (x < 1446 || x > 1570) label('times', x === 50 ? 't first' : 't', t, 'left', (x - 50) / 18.17); });
```
